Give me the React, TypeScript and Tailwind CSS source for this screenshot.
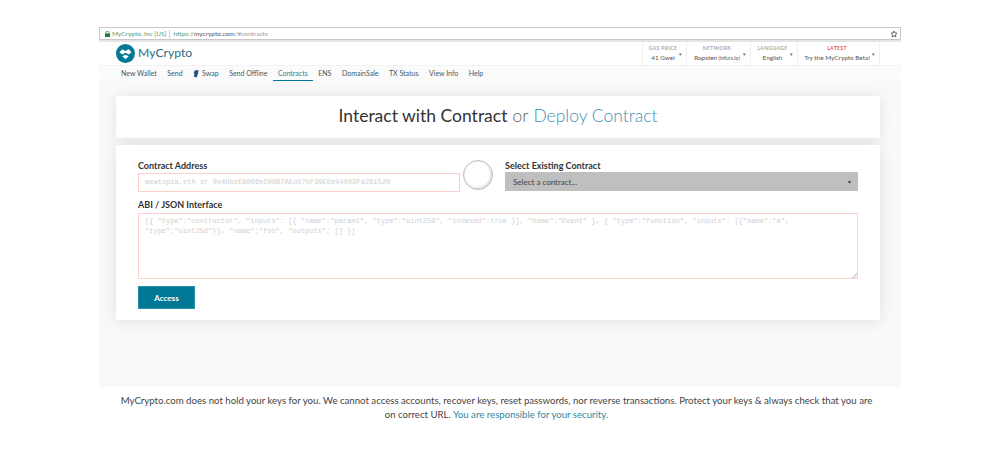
const navItems = ['New Wallet', 'Send', 'Swap', 'Send Offline', 'Contracts', 'ENS', 'DomainSale', 'TX Status', 'View Info', 'Help'];

const abiPlaceholder =
  '[{ "type":"contructor", "inputs": [{ "name":"param1", "type":"uint256", "indexed":true }], "name":"Event" }, { "type":"function", "inputs": [{"name":"a", "type":"uint256"}], "name":"foo", "outputs": [] }]';

function Logo() {
  return (
    <svg width="19" height="19" viewBox="0 0 20 20">
      <circle cx="10" cy="10" r="10" fill="#007896" />
      <path d="M3.6 8.6 L6.6 5.6 L10 7.4 L13.4 5.6 L16.4 8.6 L13.6 11 L10 9.2 L6.4 11 Z" fill="#fff" />
      <path d="M6.6 12.8 L10 11.2 L13.4 12.8 L10 16 Z" fill="#fff" />
    </svg>
  );
}

function SwapIcon() {
  return (
    <svg width="6" height="8" viewBox="0 0 6 8" className="mr-[3px]">
      <path d="M1.6 0.4 L5.6 0 L5 3.6 L3.8 7.6 L0.6 6.6 L1.6 4.6 L0.8 3.2 Z" fill="#26507f" />
    </svg>
  );
}

function Dropdown({ label, value, small, red, className }: { label: string; value: string; small?: string; red?: boolean; className: string }) {
  return (
    <div className={`relative flex flex-col items-center border-l border-[#f0f0f0] pt-[2px] pr-[3px] ${className}`}>
      <span className={`text-[5px] leading-[8px] tracking-[0.4px] font-bold ${red ? 'text-[#e8505b]' : 'text-[#a8a8a8]'}`}>{label}</span>
      <span className="mt-[1px] text-[6.4px] leading-[10px] text-[#555] whitespace-nowrap">
        {value}
        {small && <span className="text-[5.2px]"> {small}</span>}
      </span>
      <span className="absolute right-[4px] top-[9px] text-[5px] leading-[6px] text-[#666]">▾</span>
    </div>
  );
}

export default function App() {
  return (
    <div className="h-[460px] w-[1000px] bg-white font-['Lato','Noto_Sans',sans-serif] pt-[27px]">
      <div className="mx-auto w-[802px]">
        <div className="flex h-[13px] items-center border border-[#c8c8c8] pl-[5px] pr-[2px] text-[6.5px] bg-white">
          <svg width="5" height="6" viewBox="0 0 5 6" className="mr-[2px]">
            <rect y="2.4" width="5" height="3.6" fill="#1e7e34" />
            <path d="M1 2.6V1.6a1.5 1.5 0 0 1 3 0v1" fill="none" stroke="#1e7e34" strokeWidth="0.8" />
          </svg>
          <span className="text-[#5f9a6c]">MyCrypto, Inc [US]</span>
          <span className="mx-[3px] h-[8px] w-px bg-[#ccc]" />
          <span className="text-[#5f9a6c]">https://</span>
          <span className="text-[#555]">mycrypto.com</span>
          <span className="text-[#999]">/#contracts</span>
          <svg width="8" height="8" viewBox="0 0 24 24" className="ml-auto" fill="none" stroke="#444" strokeWidth="2.5">
            <path d="M12 3l2.8 5.8 6.2.9-4.5 4.4 1.1 6.3-5.6-3-5.6 3 1.1-6.3L3 9.7l6.2-.9z" />
          </svg>
        </div>
        <div className="h-[2px] bg-[#e4e4e4]" />
        <div className="flex h-[23px] items-center bg-white pl-[17px]">
          <Logo />
          <span className="ml-[3px] pb-[2px] text-[12.2px] leading-[20px] text-[#2a6f82]">MyCrypto</span>
          <div className="ml-auto mr-[21px] flex h-full">
            <Dropdown label="GAS PRICE" value="41 Gwei" className="w-[44px]" />
            <Dropdown label="NETWORK" value="Ropsten" small="(infura.io)" className="w-[64px]" />
            <Dropdown label="LANGUAGE" value="English" className="w-[47px]" />
            <Dropdown label="LATEST" value="Try the MyCrypto Beta!" red className="w-[83px] border-r" />
          </div>
        </div>
        <div className="flex h-[16px] items-stretch bg-[#fbfbfb] border-t border-[#f2f2f2] pl-[17px] text-[7px] text-[#3d5a66]">
          {navItems.map((item) => (
            <span key={item} className={`flex items-center px-[5px] mr-[0.5px] ${item === 'Contracts' ? 'border-b border-[#007896] text-[#2f7f96]' : ''}`}>
              {item === 'Swap' && <SwapIcon />}
              {item}
            </span>
          ))}
        </div>
        <div className="h-[306px] bg-[#f9f9f9] px-[17px] pt-[15px]">
          <div className="flex h-[42px] w-[764px] items-center justify-center bg-white pb-[2px] shadow-[0_1px_14px_rgba(0,0,0,0.1)] text-[17.5px] text-[#333]">
            <span>Interact with Contract</span>
            <span className="mx-[5px] font-light text-[#666]">or</span>
            <span className="font-light text-[#3f93b0]">Deploy Contract</span>
          </div>
          <div className="mt-[7px] h-[175px] w-[764px] bg-white px-[22px] pt-[15px] shadow-[0_1px_14px_rgba(0,0,0,0.1)]">
            <div className="flex h-[37px]">
              <div className="w-[322px]">
                <div className="text-[9px] leading-[11px] font-bold text-[#333]">Contract Address</div>
                <div className="mt-[2px] flex h-[19px] items-center border border-[#fbd0cd] pl-[6px] font-['Liberation_Mono',monospace] text-[7.05px] text-[#cfcfcf] whitespace-nowrap">
                  mewtopia.eth or 0x4bbeEB066eD09B7AEd07bF39EEe0460DFa261520
                </div>
              </div>
              <div className="w-[45px] pl-[3px]">
                <div className="h-[30px] w-[30px] rounded-full border border-[#bbb] bg-white shadow-[inset_-1px_-1px_3px_rgba(0,0,0,0.18)]" />
              </div>
              <div className="flex-1">
                <div className="text-[9px] leading-[11px] font-bold text-[#333]">Select Existing Contract</div>
                <div className="mt-[1px] flex h-[19px] items-center justify-between bg-[#bfbfbf] pl-[8px] pr-[7px] text-[8px] text-[#444]">
                  <span>Select a contract...</span>
                  <span className="text-[6px]">▾</span>
                </div>
              </div>
            </div>
            <div className="mt-[2px] text-[9px] leading-[11px] font-bold text-[#333]">ABI / JSON Interface</div>
            <div className="relative mt-[3px] h-[66px] border border-[#fbd0cd] px-[6px] pt-[2px] font-['Liberation_Mono',monospace] text-[7.03px] leading-[10.3px] text-[#cfcfcf]">
              {abiPlaceholder}
              <svg width="5" height="5" viewBox="0 0 5 5" className="absolute bottom-0 right-0" stroke="#888" strokeWidth="0.6">
                <path d="M0 5L5 0M2.5 5L5 2.5" />
              </svg>
            </div>
            <div className="mt-[7px] flex h-[23px] w-[57px] items-center justify-center border border-[#2a8fa8] bg-[#007896] text-[8px] font-bold text-white">Access</div>
          </div>
        </div>
        <div className="pt-[6px] pl-[16px] pr-[23px] text-center text-[9.65px] leading-[14px] text-[#444]">
          MyCrypto.com does not hold your keys for you. We cannot access accounts, recover keys, reset passwords, nor reverse transactions. Protect your keys &amp; always check that you are on correct URL. <span className="text-[#2f87a0]">You are responsible for your security.</span>
        </div>
      </div>
    </div>
  );
}
